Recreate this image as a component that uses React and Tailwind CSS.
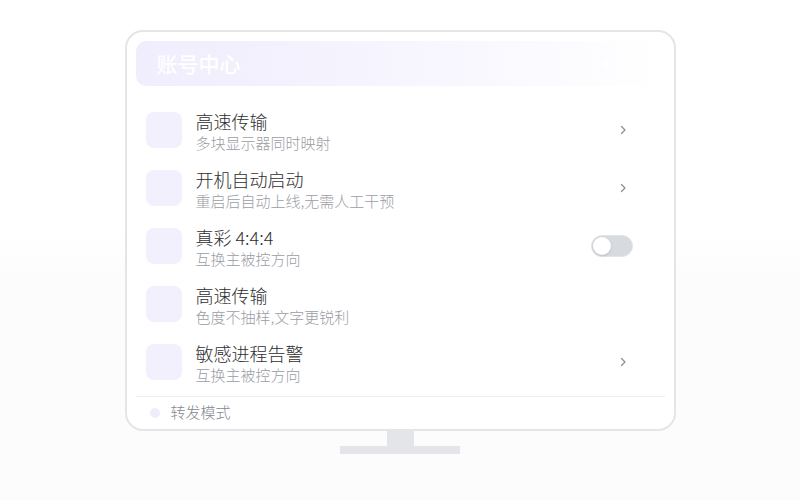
import { useState } from 'react';

const rows = [
  { title: '高速传输', sub: '多块显示器同时映射', action: 'chevron' },
  { title: '开机自动启动', sub: '重启后自动上线,无需人工干预', action: 'chevron' },
  { title: '真彩 4:4:4', sub: '互换主被控方向', action: 'toggle' },
  { title: '高速传输', sub: '色度不抽样,文字更锐利', action: null },
  { title: '敏感进程告警', sub: '互换主被控方向', action: 'chevron' },
];

function Chevron() {
  return (
    <svg width="8" height="12" viewBox="0 0 8 12" fill="none">
      <path d="M2.5 2.5l3.5 3.5-3.5 3.5" stroke="#8a8f99" strokeWidth="1.3" strokeLinecap="round" strokeLinejoin="round" />
    </svg>
  );
}

function Toggle() {
  const [on, setOn] = useState(false);
  return (
    <button
      onClick={() => setOn(!on)}
      className={`w-[42px] h-[22px] rounded-full border border-[#e2e4e8] p-[1px] flex items-center ${on ? 'bg-[#a78bfa] justify-end' : 'bg-[#d7dadf] justify-start'}`}
    >
      <span className="w-[18px] h-[18px] rounded-full bg-white shadow-sm" />
    </button>
  );
}

export default function App() {
  return (
    <div
      className="w-[800px] h-[500px] flex flex-col items-center pt-[30px] bg-[linear-gradient(to_bottom,#ffffff_46%,#fcfcfd_56%,#fcfcfd_100%)]"
      style={{ fontFamily: '"Noto Sans CJK SC", "Noto Sans", sans-serif' }}
    >
      {/* monitor screen */}
      <div className="w-[551px] h-[401px] border-2 border-[#e3e5e9] rounded-[18px] bg-white pt-[9px] px-[9px] flex flex-col">
        <div className="h-[45px] shrink-0 rounded-[10px] bg-[linear-gradient(to_right,#f0edfd_0%,#f6f4fe_45%,#ffffff_100%)] flex items-center justify-between pl-[21px] pr-[20px]">
          <span className="text-white text-[21px] font-medium">账号中心</span>
          <div className="flex items-center gap-[12px]">
            <span className="w-[6px] h-[6px] rounded-full bg-white" />
            <span className="w-[6px] h-[6px] rounded-full bg-white" />
            <span className="w-[6px] h-[6px] rounded-full bg-white" />
          </div>
        </div>

        <div className="flex flex-col pt-[15px] px-[10px] shrink-0">
          {rows.map((r, i) => (
            <div key={i} className="h-[58px] flex items-center">
              <div className="w-[36px] h-[36px] rounded-[8px] bg-[#f3f0fe] shrink-0" />
              <div className="flex flex-col ml-[14px] mt-[4px] flex-1">
                <span className="text-[18px] leading-[22px] font-light text-[#2e2e2e]">{r.title}</span>
                <span className="text-[15px] leading-[22px] font-light text-[#9a9da4]">{r.sub}</span>
              </div>
              {r.action === 'chevron' && <div className="pr-[28px] flex items-center"><Chevron /></div>}
              {r.action === 'toggle' && <div className="pr-[22px] flex items-center"><Toggle /></div>}
            </div>
          ))}
        </div>

        <div className="mt-[5px] border-t border-[#eceef1] flex items-center h-[32px] pl-[14px] shrink-0">
          <span className="w-[10px] h-[10px] rounded-full bg-[#efecfd]" />
          <span className="ml-[11px] text-[15px] font-light text-[#85888f]">转发模式</span>
        </div>
      </div>

      {/* stand */}
      <div className="w-[27px] h-[15px] bg-[#e3e5e9]" />
      <div className="w-[120px] h-[8px] bg-[#e3e5e9]" />
    </div>
  );
}
